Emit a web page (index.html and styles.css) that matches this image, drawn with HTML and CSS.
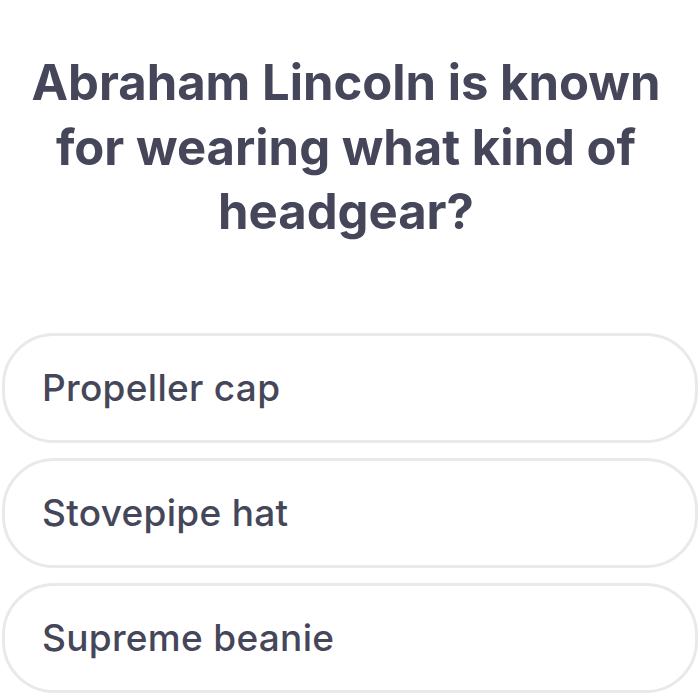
FILE: index.html
```html
<!DOCTYPE html>
<html>
<head>
<meta charset="utf-8">
<link rel="stylesheet" href="styles.css">
</head>
<body>
<div class="quiz">
  <h1 class="question">Abraham Lincoln is known for wearing what kind of headgear?</h1>
  <div class="options">
    <div class="option">Propeller cap</div>
    <div class="option">Stovepipe hat</div>
    <div class="option">Supreme beanie</div>
  </div>
</div>
</body>
</html>
```
FILE: styles.css
```css
html, body {
  margin: 0;
  padding: 0;
  background: #ffffff;
}
body {
  font-family: Inter, "Liberation Sans", sans-serif;
  color: #45465a;
}
.quiz {
  display: flex;
  flex-direction: column;
}
.question {
  margin: 0;
  padding: 51px 24px 0 16px;
  font-size: 49px;
  line-height: 64.5px;
  font-weight: 700;
  text-align: center;
}
.options {
  display: flex;
  flex-direction: column;
  gap: 15px;
  padding: 0 2px;
  margin-top: 88px;
}
.option {
  height: 104px;
  border: 3px solid #e9e9ec;
  border-radius: 52px;
  display: flex;
  align-items: center;
  padding-left: 37px;
  font-size: 37px;
  letter-spacing: 0.3px;
  font-weight: 500;
}
```
